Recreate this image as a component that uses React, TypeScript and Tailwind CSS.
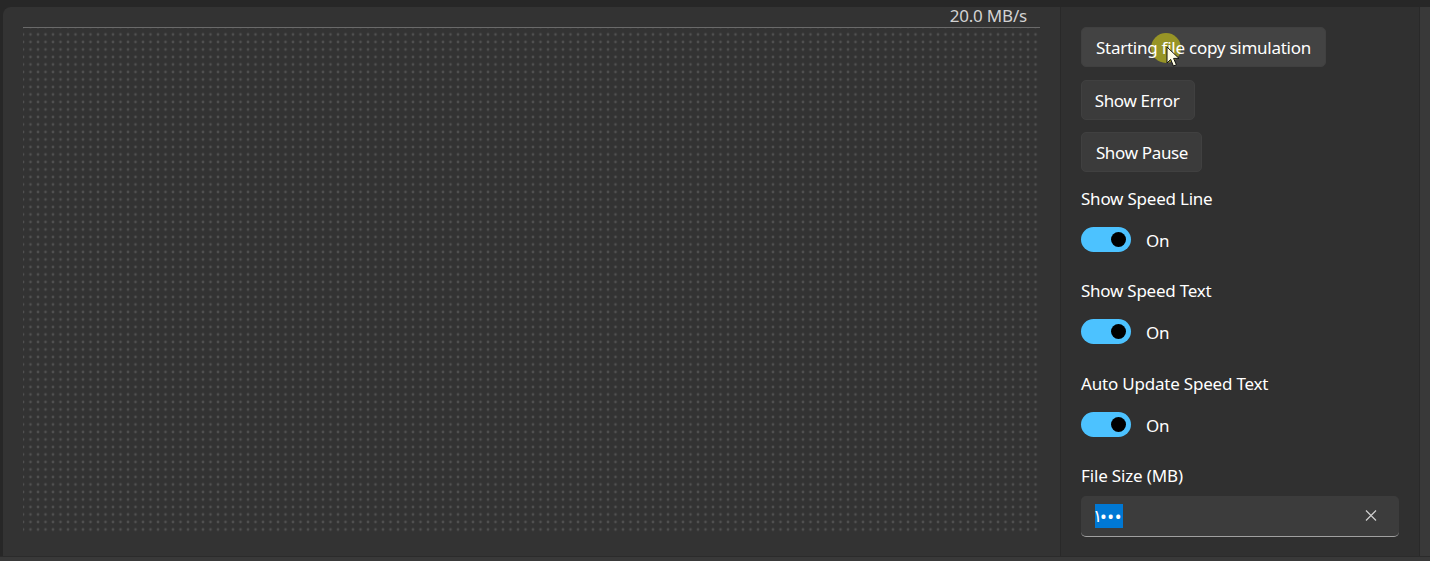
import React from "react";

function SpeedChart() {
  return (
    <section className="flex w-[1057px] shrink-0 flex-col pl-5">
      <div className="h-5 w-[1004px] text-right text-[17px] leading-[17px] tracking-[-0.2px] text-[#d2d2d2]">
        20.0 MB/s
      </div>
      <svg width="1017" height="510" viewBox="0 0 1017 510" className="block">
        <defs>
          <pattern id="dots" width="7.5" height="7.5" patternUnits="userSpaceOnUse" x="-3.75" y="-3.75">
            <circle cx="3.75" cy="3.75" r="1.3" fill="#515151" />
          </pattern>
        </defs>
        <rect width="1017" height="505" fill="url(#dots)" />
        <rect width="1017" height="1" fill="#6a6a6a" />
      </svg>
    </section>
  );
}

function Button({ className, children }: { className: string; children: React.ReactNode }) {
  return (
    <button className={`flex h-10 items-center justify-center whitespace-nowrap rounded-[5px] border border-[#404040] pt-[2px] ${className}`}>
      {children}
    </button>
  );
}

function Toggle({ label, tracking, className }: { label: string; tracking: string; className: string }) {
  return (
    <div className={className}>
      <div className={`h-6 whitespace-nowrap leading-6 ${tracking}`}>{label}</div>
      <div className="mt-4 flex h-[25px] items-center">
        <span className="flex h-[25px] w-[50px] items-center justify-end rounded-full bg-[#4cc2ff] pr-[5px]">
          <span className="size-[15px] rounded-full bg-black" />
        </span>
        <span className="ml-[15px] pt-[2px] leading-6 tracking-[-0.3px]">On</span>
      </div>
    </div>
  );
}

export default function App() {
  return (
    <div className="flex h-[561px] w-[1430px] flex-col overflow-hidden bg-[#272727] pt-[7px] font-['Noto_Sans','Open_Sans',sans-serif] text-[17px] text-white">
      <div className="ml-[3px] flex h-[549px] rounded-tl-[8px] bg-[#333333]">
        <SpeedChart />
        <aside className="w-[360px] shrink-0 border-x border-[#292929] bg-[#303030] pl-5 pt-5">
          <Button className="relative w-[245px] bg-[#434343] tracking-[-0.25px]">
            <span className="absolute left-[69px] top-[5px] size-[30px] rounded-full bg-[#979426]" />
            <span className="relative">Starting file copy simulation</span>
            <svg className="absolute left-[84px] top-[18px]" width="14" height="22" viewBox="0 0 14 22">
              <path d="M1 1v16l3.7-3.6 2.7 6.6 3-1.2-2.8-6.4H13Z" fill="#fffde5" stroke="#111" strokeWidth="1" />
            </svg>
          </Button>
          <Button className="mt-[13px] w-[114px] bg-[#3b3b3b] pr-[2px] tracking-[-0.33px]">Show Error</Button>
          <Button className="mt-3 w-[121px] bg-[#3b3b3b] pl-px tracking-[-0.34px]">Show Pause</Button>
          <Toggle className="mt-[15px]" label="Show Speed Line" tracking="tracking-[-0.22px]" />
          <Toggle className="mt-[27px]" label="Show Speed Text" tracking="tracking-[-0.25px]" />
          <Toggle className="mt-7" label="Auto Update Speed Text" tracking="tracking-[-0.2px]" />
          <div className="mt-[27px] h-6 leading-6 tracking-[-0.15px]">File Size (MB)</div>
          <div className="mt-2 flex h-[41px] w-[318px] items-center justify-between rounded-[5px] border-b border-[#a0a0a0] bg-[#3c3c3c] pb-px pl-[14px] pr-[21px]">
            <span className="flex h-6 w-7 items-center bg-[#0078d4] leading-6">
              <span className="-ml-[2px] w-[7px] shrink-0 font-['DejaVu_Sans',sans-serif] text-[17px]">١</span>
              <span className="shrink-0 text-[18px] tracking-[0.55px]">•••</span>
            </span>
            <svg width="13" height="13" viewBox="0 0 13 13" fill="none" stroke="#cfcfcf" strokeWidth="1.2">
              <path d="m1 1.5 10 10m0-10-10 10" />
            </svg>
          </div>
        </aside>
        <div className="flex-1 bg-[#393939]" />
      </div>
      <div className="h-[5px] border-t border-[#2b2b2b] bg-[#393939]" />
    </div>
  );
}
